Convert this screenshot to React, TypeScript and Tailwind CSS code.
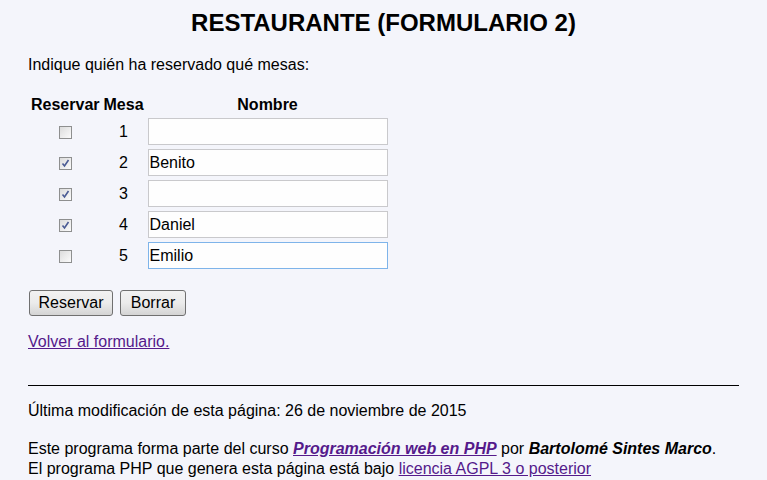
import React from "react";

function Check({ checked }: { checked: boolean }) {
  return (
    <span className="inline-block w-[13px] h-[13px] border border-[#8e8f8f] bg-gradient-to-br from-[#dcdcdc] to-[#fbfbfb] relative align-middle">
      {checked && (
        <svg className="absolute left-[1px] top-[1px]" width="9" height="9" viewBox="0 0 9 9">
          <path d="M1.5 4.5 L3.5 7 L7.5 1" fill="none" stroke="#4a5b94" strokeWidth="1.6" />
        </svg>
      )}
    </span>
  );
}

const rows = [
  { n: 1, c: false, v: "", focus: false },
  { n: 2, c: true, v: "Benito", focus: false },
  { n: 3, c: true, v: "", focus: false },
  { n: 4, c: true, v: "Daniel", focus: false },
  { n: 5, c: false, v: "Emilio", focus: true },
];

export default function App() {
  return (
    <div className="min-h-[480px] bg-[#f4f5fb] text-black px-[28px] text-[16px] leading-[normal]" style={{ fontFamily: '"Liberation Sans", Arial, sans-serif' }}>
      <h1 className="pt-[9px] text-center font-bold text-[24px] leading-[normal]">RESTAURANTE (FORMULARIO 2)</h1>
      <p className="mt-[19px]">Indique quién ha reservado qué mesas:</p>
      <table className="mt-[19px] border-separate border-spacing-[2px]">
        <thead>
          <tr>
            <th className="p-px font-bold">Reservar</th>
            <th className="p-px font-bold">Mesa</th>
            <th className="p-px font-bold">Nombre</th>
          </tr>
        </thead>
        <tbody>
          {rows.map((r) => (
            <tr key={r.n}>
              <td className="p-px text-center align-middle">
                <Check checked={r.c} />
              </td>
              <td className="p-px text-center align-middle">{r.n}</td>
              <td className="p-px align-middle">
                <div
                  className={
                    "w-[240px] h-[27px] bg-[#fefefe] border pl-px flex items-center " +
                    (r.focus ? "border-[#7eb4ea]" : "border-[#c9c9cc]")
                  }
                >
                  {r.v}
                </div>
              </td>
            </tr>
          ))}
        </tbody>
      </table>
      <div className="mt-[18px] ml-px flex gap-[7px]">
        <span className="w-[84px] h-[26px] flex items-center justify-center border border-[#707070] rounded-[3px] bg-gradient-to-b from-[#f2f2f2] via-[#ebebeb] to-[#d4d4d4]">Reservar</span>
        <span className="w-[66px] h-[26px] flex items-center justify-center border border-[#707070] rounded-[3px] bg-gradient-to-b from-[#f2f2f2] via-[#ebebeb] to-[#d4d4d4]">Borrar</span>
      </div>
      <p className="mt-[17px]">
        <a className="text-[#551a8b] underline" href="#">Volver al formulario.</a>
      </p>
      <div className="mt-[34px] h-px bg-black" />
      <p className="mt-[16px]">Última modificación de esta página: 26 de noviembre de 2015</p>
      <p className="mt-[19px] leading-[20px]">
        Este programa forma parte del curso{" "}
        <a className="text-[#551a8b] underline font-bold italic" href="#">Programación web en PHP</a> por{" "}
        <strong className="italic">Bartolomé Sintes Marco</strong>.<br />
        El programa PHP que genera esta página está bajo{" "}
        <a className="text-[#551a8b] underline" href="#">licencia AGPL 3 o posterior</a>
      </p>
    </div>
  );
}
